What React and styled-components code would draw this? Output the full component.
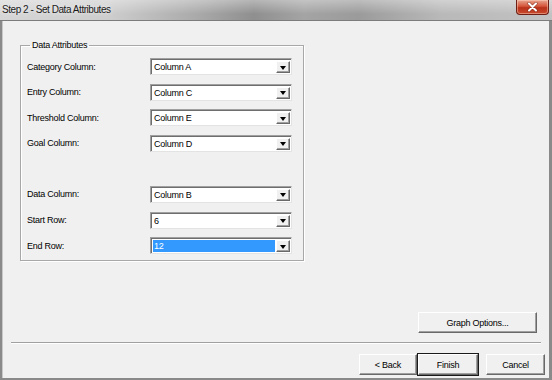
import React from 'react';
import styled, { createGlobalStyle } from 'styled-components';

const GlobalStyle = createGlobalStyle`
  html, body {
    margin: 0;
    padding: 0;
    background: #f0f0f0;
  }
  * {
    box-sizing: border-box;
  }
`;

const Window = styled.div`
  width: 552px;
  height: 380px;
  display: flex;
  flex-direction: column;
  background: #8a8a8a;
  font-family: "Liberation Sans", Arial, sans-serif;
  font-size: 9px;
  color: #000;
  overflow: hidden;
`;

const TitleBar = styled.div`
  height: 21px;
  flex: none;
  display: flex;
  align-items: flex-start;
  justify-content: space-between;
  background:
    linear-gradient(180deg, rgba(255, 255, 255, 0.35) 0%, rgba(255, 255, 255, 0) 70%),
    linear-gradient(90deg, #d6d6d6 0%, #cdcdcd 20%, #a9a9a9 36%, #8f8f8f 46%, #a4a4a4 55%, #9b9b9b 65%, #b9b9b9 80%, #c2c2c2 100%);
  border-bottom: 1px solid #7c7c7c;
`;

const Title = styled.div`
  padding: 4px 0 0 2px;
  font-size: 10px;
  letter-spacing: -0.45px;
  color: #1a1a1a;
  text-shadow: 0 0 4px rgba(255, 255, 255, 0.9);
`;

const CloseButton = styled.div`
  width: 33px;
  height: 15px;
  margin-right: 3px;
  display: flex;
  align-items: center;
  justify-content: center;
  border: 1px solid #6d1f15;
  border-top: none;
  border-radius: 0 0 4px 4px;
  background: linear-gradient(180deg, #e9a58f 0%, #d4553a 45%, #b8321a 55%, #c9492c 100%);
  box-shadow: inset 0 0 0 1px rgba(255, 220, 200, 0.45);
`;

const Client = styled.div`
  flex: 1;
  margin: 0 3px 2px 2px;
  display: flex;
  flex-direction: column;
  background: #f0f0f0;
  border-left: 1px solid #c8c8c8;
`;

const GroupBox = styled.fieldset`
  width: 284px;
  margin: 18px 0 0 17px;
  padding: 7px 10px 6px 6px;
  border: 1px solid #a8a8a8;
  box-shadow: 1px 1px 0 #fff, inset 1px 1px 0 #fff;
  display: grid;
  grid-template-columns: 123px 142px;
  grid-auto-rows: 17px;
  row-gap: 8.6px;
  align-items: center;
`;

const Legend = styled.legend`
  margin-left: 3px;
  padding: 0 2px;
  line-height: 12px;
  letter-spacing: -0.25px;
`;

const Label = styled.div`
  letter-spacing: -0.25px;
`;

const Spacer = styled.div`
  grid-column: 1 / span 2;
`;

const Combo = styled.div`
  height: 17px;
  display: flex;
  border-style: solid;
  border-width: 1px;
  border-color: #a0a0a0 #e3e3e3 #e3e3e3 #a0a0a0;
  box-shadow: inset 1px 1px 0 #6e6e6e;
  background: #fff;
  padding: 2px 1px 1px 2px;
`;

const ComboText = styled.div`
  flex: 1;
  display: flex;
  align-items: center;
  padding-left: 1px;
  letter-spacing: -0.25px;
  background: ${p => (p.selected ? '#3399ff' : 'transparent')};
  color: ${p => (p.selected ? '#fff' : '#000')};
`;

const DropButton = styled.div`
  width: 14px;
  margin-left: 1px;
  display: flex;
  align-items: center;
  justify-content: center;
  background: #f0f0f0;
  border-style: solid;
  border-width: 1px;
  border-color: #fff #696969 #696969 #fff;
  box-shadow: inset -1px -1px 0 #a0a0a0;

  &::after {
    content: '';
    width: 0;
    height: 0;
    margin-top: 1px;
    border-left: 3.5px solid transparent;
    border-right: 3.5px solid transparent;
    border-top: 4px solid #000;
  }
`;

const Fill = styled.div`
  flex: 1;
`;

const Button = styled.div`
  height: 21px;
  display: flex;
  align-items: center;
  justify-content: center;
  background: #f0f0f0;
  border-style: solid;
  border-width: 1px;
  border-color: #fff #696969 #696969 #fff;
  box-shadow: ${p =>
    p.primary
      ? '0 0 0 1px #1a1a1a, inset -1px -1px 0 #a0a0a0'
      : 'inset -1px -1px 0 #a0a0a0'};
  width: ${p => p.w}px;
  letter-spacing: -0.25px;
`;

const OptionsRow = styled.div`
  display: flex;
  justify-content: flex-end;
  padding-right: 12px;
`;

const Separator = styled.div`
  margin: 9px 8px 0 8px;
  height: 2px;
  border-top: 1px solid #a0a0a0;
  border-bottom: 1px solid #fff;
`;

const ButtonRow = styled.div`
  display: flex;
  justify-content: flex-end;
  padding: 10px 4px 3px 0;
`;

const NavGroup = styled.div`
  display: flex;
  gap: 1px;
  margin-right: 8px;
`;

const rows = [
  { label: 'Category Column:', value: 'Column A' },
  { label: 'Entry Column:', value: 'Column C' },
  { label: 'Threshold Column:', value: 'Column E' },
  { label: 'Goal Column:', value: 'Column D' },
  null,
  { label: 'Data Column:', value: 'Column B' },
  { label: 'Start Row:', value: '6' },
  { label: 'End Row:', value: '12', selected: true },
];

function CloseX() {
  return (
    <svg width="11" height="10" viewBox="0 0 11 10">
      <path d="M2 1.5 L9 8.5 M9 1.5 L2 8.5" stroke="#5a1a10" strokeWidth="3.2" strokeLinecap="round" opacity="0.5" />
      <path d="M2 1.5 L9 8.5 M9 1.5 L2 8.5" stroke="#fff" strokeWidth="2" strokeLinecap="round" />
    </svg>
  );
}

export default function App() {
  return (
    <>
      <GlobalStyle />
      <Window>
        <TitleBar>
          <Title>Step 2 - Set Data Attributes</Title>
          <CloseButton>
            <CloseX />
          </CloseButton>
        </TitleBar>
        <Client>
          <GroupBox>
            <Legend>Data Attributes</Legend>
            {rows.map((row, i) =>
              row ? (
                <React.Fragment key={i}>
                  <Label>{row.label}</Label>
                  <Combo>
                    <ComboText selected={row.selected}>{row.value}</ComboText>
                    <DropButton />
                  </Combo>
                </React.Fragment>
              ) : (
                <Spacer key={i} />
              )
            )}
          </GroupBox>
          <Fill />
          <OptionsRow>
            <Button w={119}>Graph Options...</Button>
          </OptionsRow>
          <Separator />
          <ButtonRow>
            <NavGroup>
              <Button w={58}>&lt; Back</Button>
              <Button w={60} primary>Finish</Button>
            </NavGroup>
            <Button w={59}>Cancel</Button>
          </ButtonRow>
        </Client>
      </Window>
    </>
  );
}
